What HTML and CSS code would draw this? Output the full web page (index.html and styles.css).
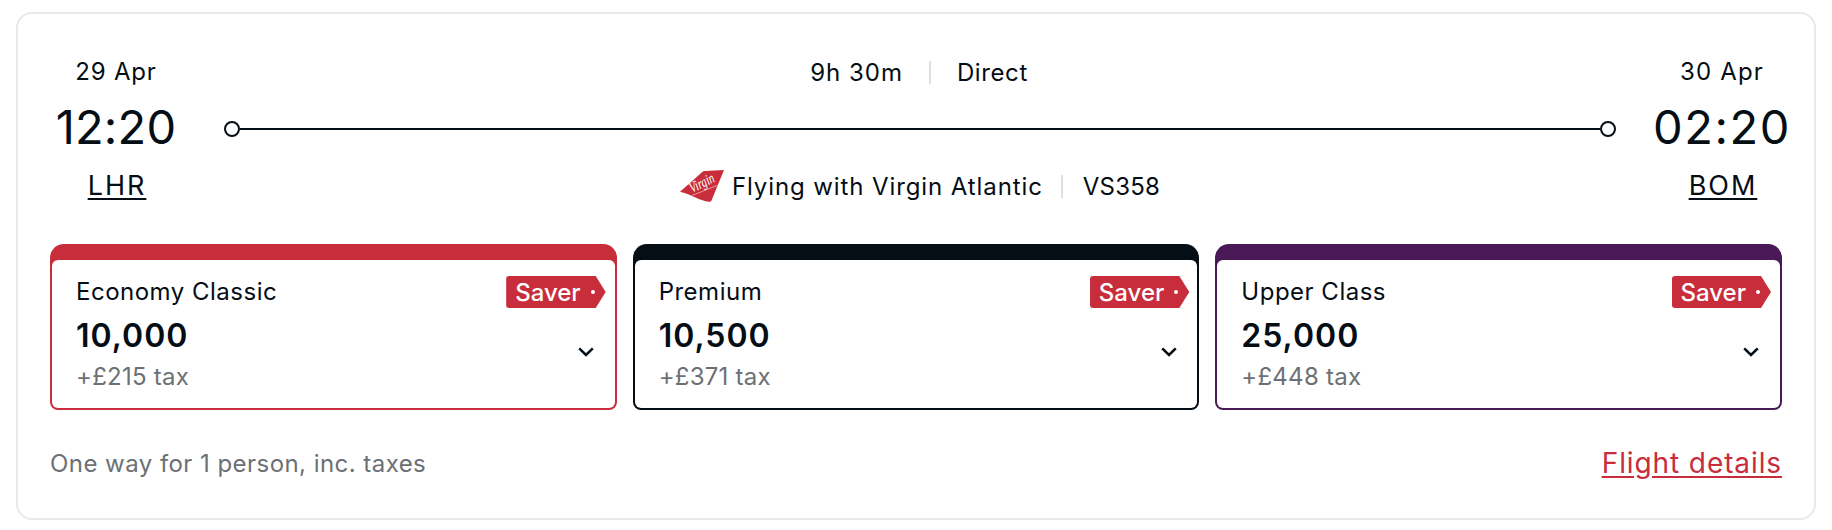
FILE: index.html
```html
<!DOCTYPE html>
<html lang="en">
<head>
<meta charset="utf-8">
<title>Flight VS358</title>
<link rel="stylesheet" href="styles.css">
</head>
<body>
<main class="card">
  <section class="journey">
    <div class="stop stop-from">
      <span class="date">29 Apr</span>
      <span class="time">12:20</span>
      <a class="code" href="#">LHR</a>
    </div>
    <div class="route">
      <div class="meta meta-top">
        <span class="dur">9h 30m</span><i class="sep sep-top"></i><span class="direct">Direct</span>
      </div>
      <div class="track"><b class="node"></b><span class="rail"></span><b class="node"></b></div>
      <div class="meta meta-carrier">
        <svg class="logo" viewBox="0 0 44 32" width="44" height="32" aria-hidden="true">
          <path class="fin" d="M0 21.7 L22 2.2 Q23.2 1 25 1 L44 0 L31.5 30.5 Q31 32 29 31.7 C20 31 13 25 0 21.7Z"/>
          <text class="script" transform="translate(12 23) rotate(-26) scale(0.72 1)">Virgin</text>
          <path class="swoosh" d="M12 25.5 L37 15.5"/>
        </svg>
        <span class="carrier">Flying with Virgin Atlantic</span><i class="sep sep-bottom"></i><span class="flightno">VS358</span>
      </div>
    </div>
    <div class="stop stop-to">
      <span class="date">30 Apr</span>
      <span class="time">02:20</span>
      <a class="code" href="#">BOM</a>
    </div>
  </section>

  <section class="tiers">
    <article class="tier tier-red">
      <div class="tier-body">
        <div class="tier-text">
          <span class="tier-name">Economy Classic</span>
          <strong class="points">10,000</strong>
          <span class="tax">+£215 tax</span>
        </div>
        <div class="tier-side">
          <span class="saver">Saver<i class="dot"></i></span>
          <svg class="chev" viewBox="0 0 16 10" width="16" height="10" aria-hidden="true"><path d="M1.2 1.4 L8 8 L14.8 1.4"/></svg>
        </div>
      </div>
    </article>
    <article class="tier tier-dark">
      <div class="tier-body">
        <div class="tier-text">
          <span class="tier-name">Premium</span>
          <strong class="points">10,500</strong>
          <span class="tax">+£371 tax</span>
        </div>
        <div class="tier-side">
          <span class="saver">Saver<i class="dot"></i></span>
          <svg class="chev" viewBox="0 0 16 10" width="16" height="10" aria-hidden="true"><path d="M1.2 1.4 L8 8 L14.8 1.4"/></svg>
        </div>
      </div>
    </article>
    <article class="tier tier-purple">
      <div class="tier-body">
        <div class="tier-text">
          <span class="tier-name">Upper Class</span>
          <strong class="points">25,000</strong>
          <span class="tax">+£448 tax</span>
        </div>
        <div class="tier-side">
          <span class="saver">Saver<i class="dot"></i></span>
          <svg class="chev" viewBox="0 0 16 10" width="16" height="10" aria-hidden="true"><path d="M1.2 1.4 L8 8 L14.8 1.4"/></svg>
        </div>
      </div>
    </article>
  </section>

  <footer class="foot">
    <span class="note">One way for 1 person, inc. taxes</span>
    <a class="details" href="#">Flight details</a>
  </footer>
</main>
</body>
</html>
```
FILE: styles.css
```css
* { box-sizing: border-box; }
html, body { margin: 0; background: #fff; }
body {
  padding: 12px 16px;
  font-family: Inter, "Liberation Sans", sans-serif;
  color: #050d15;
  font-size: 24px;
}
.card {
  height: 508px;
  border: 2px solid #e8e9e9;
  border-radius: 16px;
  padding: 43px 32px 0;
}
.journey {
  display: flex;
  height: 149px;
}
.stop {
  display: flex;
  flex-direction: column;
  align-items: center;
  flex: none;
}
.stop-from { width: 132px; }
.stop-to { width: 122px; }
.date { line-height: 30px; white-space: nowrap; letter-spacing: 0.8px; }
.stop-to .date { letter-spacing: 1.2px; margin-left: 2px; }
.time {
  font-size: 47px;
  line-height: 66px;
  font-weight: 400;
  white-space: nowrap;
  margin-top: 7px;
  letter-spacing: 0.2px;
}
.stop-to .time { letter-spacing: 1.6px; margin-left: 2px; }
.code {
  color: inherit;
  font-size: 27px;
  line-height: 30px;
  margin: 11px 0 0 2px;
  text-underline-offset: 3px;
  letter-spacing: 2px;
}
.stop-to .code { margin-left: 4px; }
.route {
  flex: 1;
  display: flex;
  flex-direction: column;
  align-items: center;
  min-width: 0;
}
.meta {
  display: flex;
  align-items: center;
  height: 30px;
  white-space: nowrap;
}
.meta-top { margin-right: 4px; }
.meta-carrier { margin: 34px 2px 0 0; }
.dur { letter-spacing: 1px; }
.direct { letter-spacing: 0.6px; }
.carrier { letter-spacing: 0.9px; }
.flightno { letter-spacing: 0.2px; }
.sep { width: 2px; height: 23px; background: #dedfe0; margin: 0 26px; }
.sep-bottom { margin: 0 20px 0 18px; }
.track {
  display: flex;
  align-items: center;
  align-self: stretch;
  margin: 34px 44px 0 42px;
  height: 16px;
}
.node {
  width: 16px;
  height: 16px;
  border: 2px solid #050d15;
  border-radius: 50%;
  flex: none;
}
.rail { flex: 1; height: 2px; background: #050d15; }
.logo { margin-right: 8px; flex: none; }
.fin { fill: #c82d3b; }
.script {
  font-family: "Liberation Serif", serif;
  font-style: italic;
  font-size: 15px;
  fill: #fff;
}
.swoosh { stroke: #fff; stroke-width: 0.7; fill: none; opacity: 0.75; }
.tiers {
  display: grid;
  grid-template-columns: repeat(3, 1fr);
  gap: 16px;
  margin-top: 38px;
}
.tier {
  height: 166px;
  padding: 16px 2px 2px;
  border-radius: 14px 14px 8px 8px;
}
.tier-red { background: #c82d3b; }
.tier-dark { background: #050d15; }
.tier-purple { background: #4a1a56; }
.tier-body {
  display: flex;
  justify-content: space-between;
  height: 100%;
  background: #fff;
  border-radius: 6px;
  padding: 16px 9px 0 24px;
}
.tier-dark .tier-body { padding-right: 8px; }
.tier-text { display: flex; flex-direction: column; }
.tier-name { line-height: 32px; letter-spacing: 0.5px; }
.points { font-size: 32px; line-height: 42px; font-weight: 600; margin-top: 7px; letter-spacing: 1px; }
.tax { color: #6c7075; line-height: 32px; margin-top: 4px; letter-spacing: 0.25px; }
.tier-side { display: flex; flex-direction: column; align-items: flex-end; }
.saver {
  display: flex;
  align-items: center;
  gap: 10px;
  height: 32px;
  padding: 0 11px 0 9px;
  background: #c82d3b;
  color: #fff;
  font-weight: 500;
  border-radius: 3px;
  clip-path: polygon(0 0, calc(100% - 10px) 0, 100% 50%, calc(100% - 10px) 100%, 0 100%);
}
.dot { width: 4px; height: 4px; border-radius: 50%; background: #fff; }
.chev { margin: 39px 12px 0 0; }
.chev path { fill: none; stroke: #050d15; stroke-width: 2.6; }
.foot {
  display: flex;
  justify-content: space-between;
  align-items: center;
  margin-top: 38px;
  height: 30px;
}
.note { color: #6c7075; letter-spacing: 0.45px; }
.details { color: #c82d3b; font-size: 28px; text-underline-offset: 3px; letter-spacing: 0.9px; }
```
